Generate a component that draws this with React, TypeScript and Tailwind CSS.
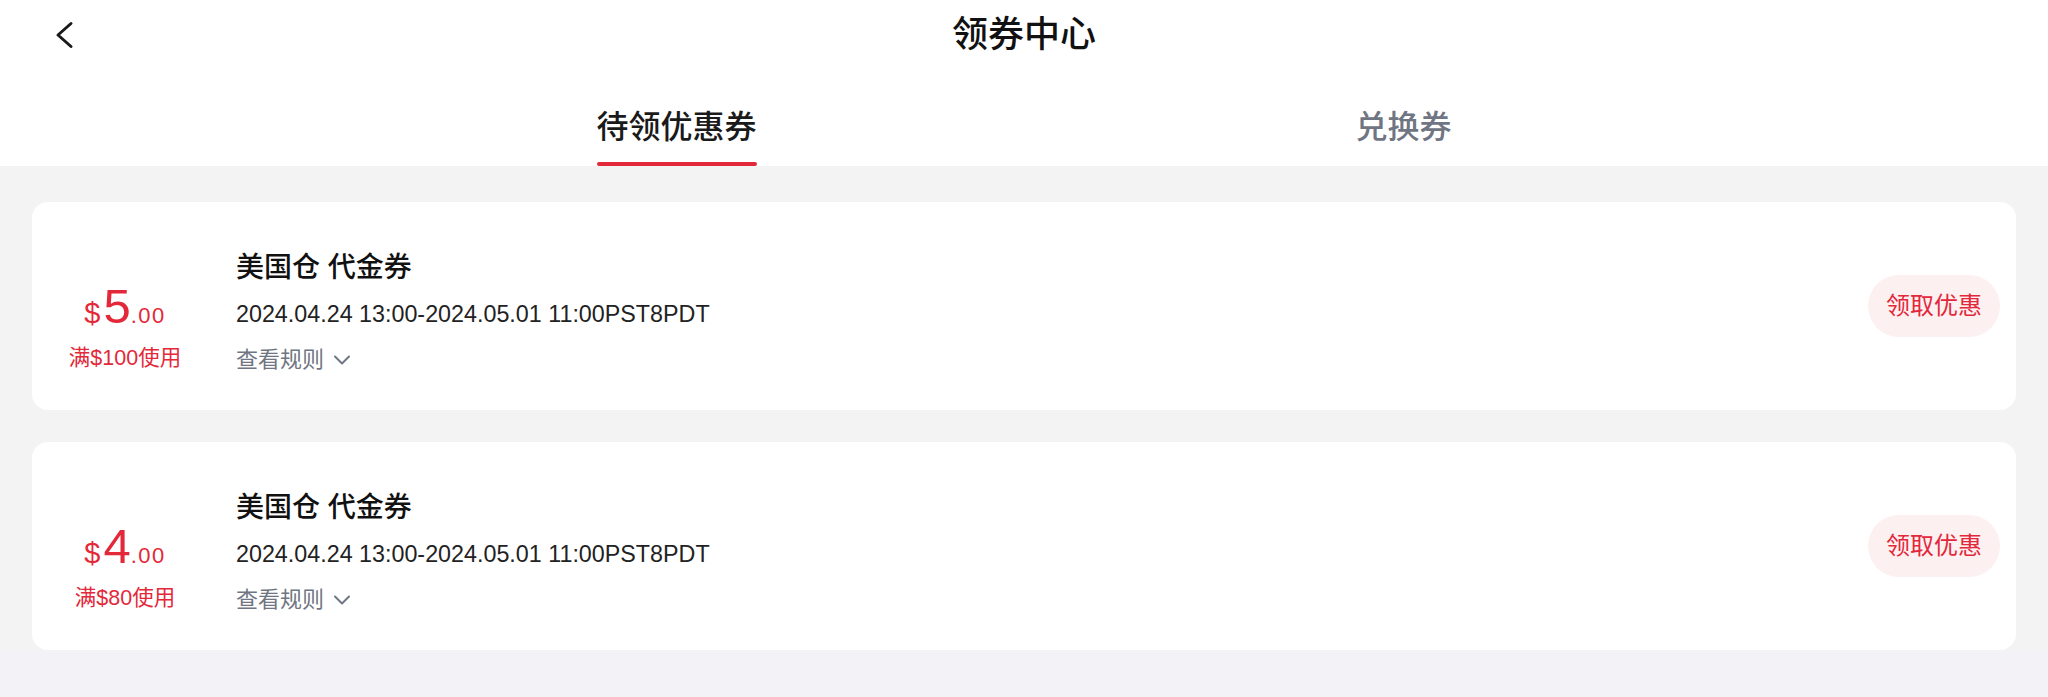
import React from "react";

const RED = "text-[#e3283a]";

interface Coupon {
  id: number;
  amount: string;
  threshold: string;
  title: string;
  period: string;
}

const coupons: Coupon[] = [
  { id: 1, amount: "5", threshold: "满$100使用", title: "美国仓 代金券", period: "2024.04.24 13:00-2024.05.01 11:00PST8PDT" },
  { id: 2, amount: "4", threshold: "满$80使用", title: "美国仓 代金券", period: "2024.04.24 13:00-2024.05.01 11:00PST8PDT" },
];

function CouponCard({ coupon }: { coupon: Coupon }) {
  return (
    <div className="h-[208px] rounded-[16px] bg-white flex items-start">
      {/* amount */}
      <div className="w-[186px] pt-[80px] flex flex-col items-center">
        <div className={`flex items-baseline ${RED}`}>
          <span className="text-[29px] leading-none font-medium">$</span>
          <span className="text-[49px] leading-none ml-[3px]">{coupon.amount}</span>
          <span className="text-[22px] leading-none tracking-[1.5px]">.00</span>
        </div>
        <div className={`mt-[13px] text-[21.5px] leading-[28px] ${RED}`}>{coupon.threshold}</div>
      </div>

      {/* info */}
      <div className="ml-[18px] pt-[48px] flex flex-col">
        <div className="text-[28px] leading-[36px] font-medium text-[#111]">{coupon.title}</div>
        <div className="mt-[13px] text-[23.3px] leading-[30px] text-[#222]">{coupon.period}</div>
        <div className="mt-[16px] flex items-center text-[22px] leading-[30px] text-[#6f7582]">
          查看规则
          <svg width="18" height="10" viewBox="0 0 18 10" className="ml-[9px]" fill="none">
            <path d="M2 1.5 L9 8.5 L16 1.5" stroke="#6f7582" strokeWidth="2" strokeLinecap="round" strokeLinejoin="round" />
          </svg>
        </div>
      </div>

      <button className={`ml-auto mr-[16px] self-center w-[132px] h-[62px] rounded-full bg-[#fdf0f1] text-[24px] leading-none ${RED}`}>
        领取优惠
      </button>
    </div>
  );
}

export default function App() {
  return (
    <div
      className="w-full h-screen bg-[#f2f2f7]"
      style={{ fontFamily: '"Liberation Sans", "Noto Sans CJK SC", sans-serif' }}
    >
      {/* header */}
      <div className="bg-white h-[166px] flex flex-col">
        <div className="relative h-[70px] flex items-center justify-center">
          <button className="absolute left-[54px] top-[20px]">
            <svg width="20" height="30" viewBox="0 0 20 30" fill="none">
              <path d="M17 3.5 L4 15 L17 26.5" stroke="#1a1a1a" strokeWidth="3" strokeLinecap="round" strokeLinejoin="round" />
            </svg>
          </button>
          <h1 className="text-[36px] leading-[44px] font-medium text-[#111]">领券中心</h1>
        </div>

        <div className="flex-1 grid grid-cols-2 pl-[313px] pr-[281px]">
          <div className="flex flex-col items-center justify-end">
            <span className="text-[32px] leading-[40px] font-medium text-[#1a1a1a]">待领优惠券</span>
            <span className="mt-[15px] h-[4px] w-[160px] rounded-full bg-[#e3283a]" />
          </div>
          <div className="flex flex-col items-center justify-end">
            <span className="text-[32px] leading-[40px] font-medium text-[#6f7582]">兑换券</span>
            <span className="mt-[15px] h-[4px] w-[160px]" />
          </div>
        </div>
      </div>

      {/* list */}
      <div className="bg-[#f3f3f3] pt-[36px] px-[32px] flex flex-col gap-[32px]">
        {coupons.map((c) => (
          <CouponCard key={c.id} coupon={c} />
        ))}
      </div>
    </div>
  );
}
